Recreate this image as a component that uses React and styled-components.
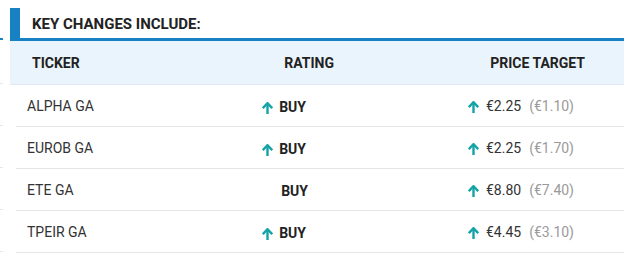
import styled, { createGlobalStyle } from "styled-components";

const GlobalStyle = createGlobalStyle`
  html, body {
    margin: 0;
    padding: 0;
    background: #fff;
    font-family: Roboto, "Liberation Sans", Arial, sans-serif;
    color: #222;
  }
`;

const rows = [
  { ticker: "ALPHA GA", up: true, rating: "BUY", target: "€2.25", prev: "(€1.10)" },
  { ticker: "EUROB GA", up: true, rating: "BUY", target: "€2.25", prev: "(€1.70)" },
  { ticker: "ETE GA", up: false, rating: "BUY", target: "€8.80", prev: "(€7.40)" },
  { ticker: "TPEIR GA", up: true, rating: "BUY", target: "€4.45", prev: "(€3.10)" },
];

function Arrow() {
  return (
    <svg width="11" height="12" viewBox="0 0 11 12">
      <path d="M5.5 2 V12" fill="none" stroke="#14a3a6" strokeWidth="2.4" />
      <path d="M0.8 6.2 L5.5 1.2 L10.2 6.2" fill="none" stroke="#14a3a6" strokeWidth="2.4" strokeLinejoin="miter" />
    </svg>
  );
}

function App() {
  return (
    <Page>
      <GlobalStyle />
      <Sliver>
        <SliverHead />
        {rows.map((r) => (
          <SliverRow key={r.ticker} />
        ))}
      </Sliver>
      <Panel>
        <Title>KEY CHANGES INCLUDE:</Title>
        <HeadRow>
          <HeadCell>TICKER</HeadCell>
          <HeadCell $align="right">RATING</HeadCell>
          <HeadCell $align="right">PRICE TARGET</HeadCell>
        </HeadRow>
        {rows.map((r) => (
          <Row key={r.ticker}>
            <Ticker>{r.ticker}</Ticker>
            <Rating $up={r.up}>
              {r.up && <Arrow />}
              <b>{r.rating}</b>
            </Rating>
            <Target>
              <Arrow />
              <span>{r.target}</span>
              <Prev>{r.prev}</Prev>
            </Target>
          </Row>
        ))}
      </Panel>
    </Page>
  );
}

const Page = styled.div`
  display: flex;
  width: 624px;
  height: 255px;
  overflow: hidden;
`;

const Sliver = styled.div`
  width: 3px;
  padding-top: 38px;
  flex-shrink: 0;
`;

const SliverHead = styled.div`
  height: 43px;
  border-top: 2px solid #1781c4;
  border-bottom: 1px solid #e2e8ee;
`;

const SliverRow = styled.div`
  height: 41px;
  border-bottom: 1px solid #e6e6e6;
`;

const Panel = styled.div`
  flex: 1;
  margin-left: 7px;
  padding-top: 8px;
`;

const Title = styled.div`
  height: 33px;
  box-sizing: border-box;
  border-left: 10px solid #1781c4;
  border-bottom: 3px solid #1781c4;
  padding: 1px 0 0 12px;
  display: flex;
  align-items: center;
  font-size: 15px;
  font-weight: 700;
  color: #222;
`;

const HeadRow = styled.div`
  display: grid;
  grid-template-columns: 1fr 120px 251px;
  align-items: center;
  height: 44px;
  background: #eaf4fd;
  border-bottom: 1px solid #e3e9ef;
  box-sizing: border-box;
  padding: 0 39px 0 22px;
`;

const HeadCell = styled.div`
  font-size: 14px;
  font-weight: 700;
  color: #222;
  text-align: ${(p) => p.$align || "left"};
`;

const Row = styled.div`
  display: grid;
  grid-template-columns: 1fr 120px 266px;
  align-items: center;
  height: 42px;
  margin-left: 6px;
  padding: 0 50px 0 11px;
  border-bottom: 1px solid #e6e6e6;
  box-sizing: border-box;
  font-size: 14px;
  color: #333;
`;

const Ticker = styled.div``;

const Rating = styled.div`
  display: flex;
  align-items: center;
  justify-content: flex-end;
  gap: 6px;
  padding-right: ${(p) => (p.$up ? "2px" : "0")};
  padding-top: 2px;
  b {
    font-weight: 700;
    color: #222;
  }
  svg {
    margin-top: 2px;
  }
`;

const Target = styled.div`
  display: flex;
  align-items: center;
  justify-content: flex-end;
  gap: 7px;
  color: #333;
  svg {
    margin-top: 2px;
  }
`;

const Prev = styled.span`
  color: #9a9a9a;
  margin-left: 1px;
`;

export default App;
